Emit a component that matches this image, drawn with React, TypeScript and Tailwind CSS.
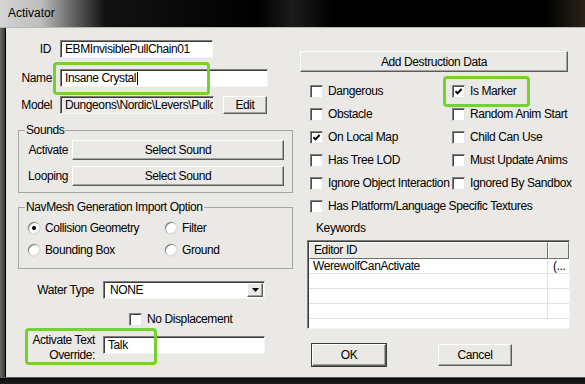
import React from 'react';

/**
 * Activator — classic Win32 form dialog, with green highlight marks
 */

function TextBox({ className, children }: { className: string; children?: React.ReactNode }) {
  return (
    <div
      className={`h-[18px] border border-t-[#7d7d7d] border-l-[#7d7d7d] border-r-[#f4f4f4] border-b-[#f4f4f4] shadow-[inset_1px_1px_0_#3c3c3c] pl-[4px] leading-[16px] overflow-hidden whitespace-nowrap flex items-center ${className}`}
    >
      {children}
    </div>
  );
}

function Btn({ className, children }: { className: string; children?: React.ReactNode }) {
  return (
    <div
      className={`flex items-center justify-center bg-[#ebe9e6] border border-t-white border-l-white border-r-[#5c5c5c] border-b-[#5c5c5c] shadow-[inset_-1px_-1px_0_#a3a3a3] ${className}`}
    >
      {children}
    </div>
  );
}

function Check({ checked = false }: { checked?: boolean }) {
  return (
    <div className="w-[13px] h-[13px] shrink-0 bg-white border border-t-[#808080] border-l-[#808080] border-r-[#e6e6e6] border-b-[#e6e6e6] shadow-[inset_1px_1px_0_#4a4a4a] flex items-center justify-center">
      {checked ? (
        <svg width="9" height="9" viewBox="0 0 9 9">
          <polyline points="1.5,4.2 3.5,6.4 7.6,2" fill="none" stroke="#000" strokeWidth="1.9" />
        </svg>
      ) : null}
    </div>
  );
}

function CheckRow({ label, checked, className = '' }: { label: string; checked?: boolean; className?: string }) {
  return (
    <div className={`flex items-center gap-[5px] h-[14px] whitespace-nowrap ${className}`}>
      <Check checked={checked} />
      <span>{label}</span>
    </div>
  );
}

function Radio({ label, checked = false }: { label: string; checked?: boolean }) {
  return (
    <div className="flex items-center gap-[5px] h-[16px] whitespace-nowrap">
      <div className="w-[12px] h-[12px] rounded-full bg-white shadow-[inset_1px_1px_0_#808080,inset_-1px_-1px_0_#e0e0e0,0_0_0_0.5px_#c8c8c8] flex items-center justify-center">
        {checked ? <div className="w-[4px] h-[4px] rounded-full bg-black" /> : null}
      </div>
      <span>{label}</span>
    </div>
  );
}

function Mark({ className }: { className: string }) {
  return <div className={`absolute border-[3px] border-[#74d12f] rounded-[4px] pointer-events-none ${className}`} />;
}

export default function App() {
  return (
    <div className="w-[585px] h-[384px] bg-black flex flex-col overflow-hidden font-['Liberation_Sans',Arial,sans-serif] text-[12px] tracking-[-0.4px] text-black">
      {/* Title bar */}
      <div className="h-[28px] shrink-0 flex items-center pl-[8px] pb-[1px] border-b border-[#b8b8b8] tracking-normal bg-[linear-gradient(90deg,#d4d4d4_0%,#bdbdbd_7%,#6a6a6a_12%,#121212_18%,#000_44%,#1c1c1c_50%,#000_57%,#000_93%,#2a2219_100%)]">
        Activator
      </div>

      <div className="flex-1 flex min-h-0">
        {/* Left frame */}
        <div className="w-[6px] shrink-0 bg-[linear-gradient(90deg,#6a6a6a,#3a3a3a)] border-r border-black" />

        {/* Client area */}
        <div className="flex-1 flex bg-[#ebe9e6] relative">
          {/* Left column */}
          <div className="w-[294px] shrink-0 flex flex-col pt-[12px]">
            <div className="flex items-center h-[18px]">
              <span className="w-[45px] text-right">ID</span>
              <TextBox className="ml-[9px] w-[153px] bg-white">EBMInvisiblePullChain01</TextBox>
            </div>
            <div className="flex items-center h-[18px] mt-[11px]">
              <span className="w-[46px] text-right">Name</span>
              <TextBox className="ml-[8px] w-[208px] bg-white">
                Insane Crystal
                <span className="inline-block w-[1px] h-[13px] bg-black ml-[1px]" />
              </TextBox>
            </div>
            <div className="flex items-center h-[18px] mt-[9px]">
              <span className="w-[46px] text-right">Model</span>
              <TextBox className="ml-[8px] w-[154px] bg-[#efede9]">Dungeons\Nordic\Levers\Pullc</TextBox>
              <Btn className="ml-[9px] w-[44px] h-[18px]">Edit</Btn>
            </div>

            {/* Sounds */}
            <fieldset className="mt-[9px] ml-[12px] w-[275px] border border-[#a5a5a5] pb-[6px]">
              <legend className="ml-[6px] px-[1px] leading-[14px]">Sounds</legend>
              <div className="flex items-center mt-[3px]">
                <span className="w-[49px] text-right">Activate</span>
                <Btn className="ml-[4px] w-[212px] h-[20px]">Select Sound</Btn>
              </div>
              <div className="flex items-center mt-[6px]">
                <span className="w-[49px] text-right">Looping</span>
                <Btn className="ml-[4px] w-[212px] h-[20px]">Select Sound</Btn>
              </div>
            </fieldset>

            {/* NavMesh */}
            <fieldset className="mt-[7px] ml-[12px] w-[275px] border border-[#a5a5a5] pb-[10px]">
              <legend className="ml-[6px] px-[1px] leading-[14px]">NavMesh Generation Import Option</legend>
              <div className="grid grid-cols-[137px_1fr] gap-y-[6px] pl-[9px] mt-[6px]">
                <Radio label="Collision Geometry" checked />
                <Radio label="Filter" />
                <Radio label="Bounding Box" />
                <Radio label="Ground" />
              </div>
            </fieldset>

            <div className="flex items-center h-[18px] mt-[12px]">
              <span className="w-[88px] text-right">Water Type</span>
              <TextBox className="ml-[9px] w-[162px] bg-white pl-[6px] pr-[1px] justify-between">
                <span>NONE</span>
                <Btn className="w-[16px] h-[14px]">
                  <svg width="7" height="4" viewBox="0 0 7 4">
                    <polygon points="0,0 7,0 3.5,4" fill="#000" />
                  </svg>
                </Btn>
              </TextBox>
            </div>

            <CheckRow label="No Displacement" className="mt-[13px] pl-[123px] h-[13px]" />

            <div className="flex items-start mt-[7px]">
              <span className="w-[89px] text-right leading-[15px]">
                Activate Text
                <br />
                Override:
              </span>
              <TextBox className="ml-[8px] mt-[3px] w-[162px] bg-white">Talk</TextBox>
            </div>
          </div>

          {/* Right column */}
          <div className="flex-1 flex flex-col">
            <Btn className="mt-[23px] w-[268px] h-[21px]">Add Destruction Data</Btn>

            <div className="grid grid-cols-[142px_1fr] gap-y-[9px] pl-[10px] mt-[12px]">
              <CheckRow label="Dangerous" />
              <CheckRow label="Is Marker" checked />
              <CheckRow label="Obstacle" />
              <CheckRow label="Random Anim Start" />
              <CheckRow label="On Local Map" checked />
              <CheckRow label="Child Can Use" />
              <CheckRow label="Has Tree LOD" />
              <CheckRow label="Must Update Anims" />
              <CheckRow label="Ignore Object Interaction" />
              <CheckRow label="Ignored By Sandbox" />
              <CheckRow label="Has Platform/Language Specific Textures" className="col-span-2" />
            </div>

            <div className="mt-[8px] pl-[16px] h-[14px] leading-[14px]">Keywords</div>

            {/* Keyword list */}
            <div className="mt-[5px] ml-[7px] w-[263px] h-[89px] bg-white border border-t-[#7d7d7d] border-l-[#7d7d7d] border-r-[#f4f4f4] border-b-[#f4f4f4] shadow-[inset_1px_1px_0_#3c3c3c] pt-[1px] pl-[1px] overflow-hidden">
              <div className="flex h-[17px]">
                <div className="w-[239px] bg-[#ebe9e6] border border-t-white border-l-white border-r-[#707070] border-b-[#707070] pl-[4px] leading-[15px]">
                  Editor ID
                </div>
                <div className="flex-1 bg-[#ebe9e6] border border-t-white border-l-white border-r-[#707070] border-b-[#707070]" />
              </div>
              {['WerewolfCanActivate', '', '', ''].map((t, i) => (
                <div key={i} className="flex h-[15px] border-b border-[#e2e2e2] leading-[14px]">
                  <div className="w-[239px] pl-[4px] border-r border-[#e2e2e2] whitespace-nowrap">{t}</div>
                  <div className="flex-1 pl-[5px]">{t ? '(...' : ''}</div>
                </div>
              ))}
            </div>

            <div className="flex mt-[15px] ml-[12px] gap-[52px]">
              <Btn className="w-[74px] h-[22px] outline outline-1 outline-[#3a3a3a]">OK</Btn>
              <Btn className="w-[74px] h-[22px]">Cancel</Btn>
            </div>
          </div>

          {/* Highlight marks */}
          <Mark className="left-[47px] top-[34px] w-[157px] h-[33px]" />
          <Mark className="left-[437px] top-[48px] w-[87px] h-[31px]" />
          <Mark className="left-[19px] top-[300px] w-[132px] h-[37px]" />
        </div>
      </div>

      {/* Bottom frame */}
      <div className="h-[7px] shrink-0 border-t border-[#5a5a5a] bg-[linear-gradient(180deg,#0a0a0a,#1e1e1e)]" />
    </div>
  );
}
